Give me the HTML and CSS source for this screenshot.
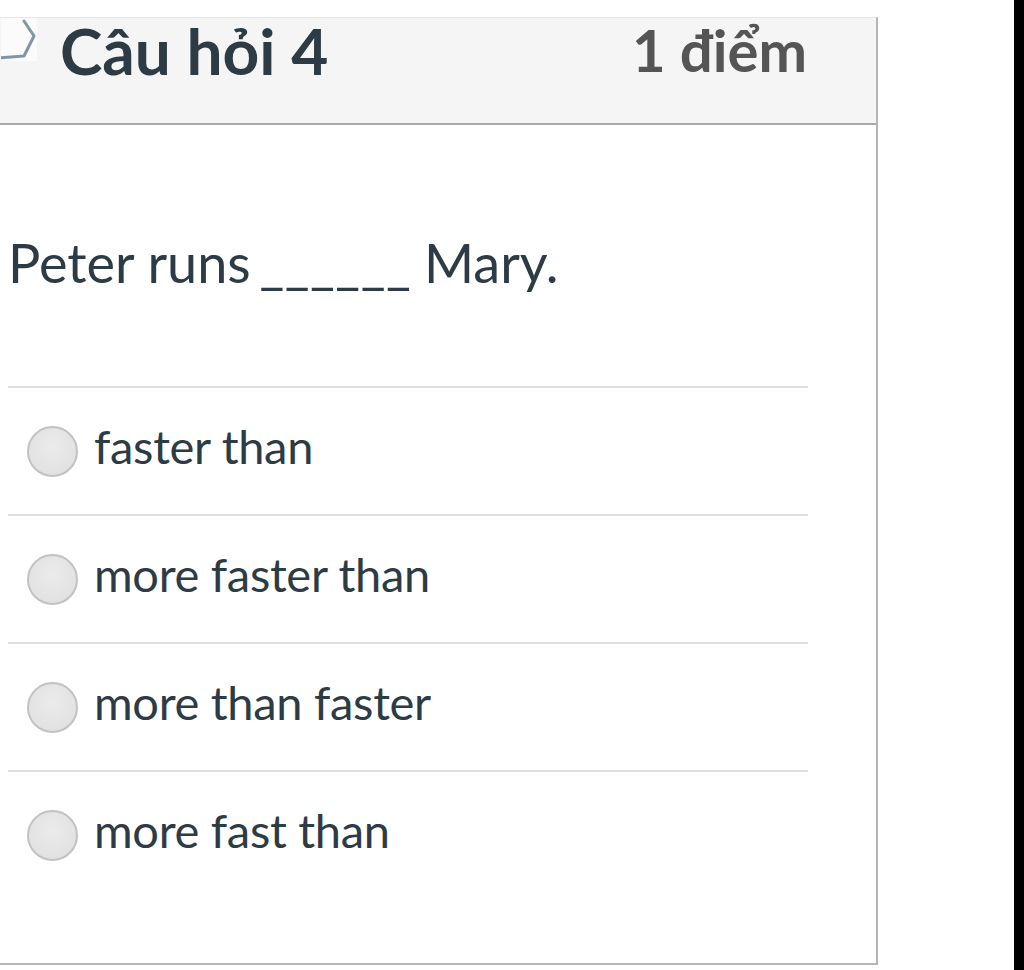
FILE: index.html
```html
<!DOCTYPE html>
<html lang="vi">
<head>
<meta charset="utf-8">
<title>Câu hỏi 4</title>
<link rel="stylesheet" href="styles.css">
</head>
<body>
<div class="screen">
  <div class="page">
    <div class="card">
      <div class="card-header">
        <svg class="flag" width="36" height="43" viewBox="0 0 36 43" aria-hidden="true">
          <path d="M23 3 L33 18 L23 38 L-2 40" fill="none" stroke="#7f95a8" stroke-width="3" stroke-linejoin="round" stroke-linecap="round"/>
        </svg>
        <h2 class="title">Câu hỏi 4</h2>
        <span class="points">1 điểm</span>
      </div>
      <div class="card-body">
        <p class="question">Peter runs <span class="blank">______</span> Mary.</p>
        <ul class="answers">
          <li class="answer"><span class="radio"></span><span class="label">faster than</span></li>
          <li class="answer"><span class="radio"></span><span class="label">more faster than</span></li>
          <li class="answer"><span class="radio"></span><span class="label">more than faster</span></li>
          <li class="answer"><span class="radio"></span><span class="label">more fast than</span></li>
        </ul>
      </div>
    </div>
  </div>
  <div class="edge"></div>
</div>
</body>
</html>
```

FILE: styles.css
```css
html {
  margin: 0;
  padding: 0;
  background: #ffffff;
}
body {
  margin: 0;
  padding: 0;
  font-family: Lato, "Open Sans", "Liberation Sans", sans-serif;
  color: #2d3b45;
}
.screen {
  display: flex;
  width: 1024px;
  height: 970px;
  overflow: hidden;
}
.page {
  flex: 0 0 1014px;
  min-width: 0;
  background: #ffffff;
  overflow: hidden;
}
.edge {
  flex: 0 0 10px;
  height: 970px;
  background-color: #000000;
}
.card {
  margin-top: 17px;
  margin-left: -30px;
  width: 908px;
  height: 948px;
  border: 2px solid #b5b5b5;
  border-top: 1px solid #e6e6e6;
  box-sizing: border-box;
  background: #ffffff;
}
.card-header {
  display: flex;
  align-items: flex-start;
  height: 107px;
  box-sizing: border-box;
  background: #f5f5f5;
  border-bottom: 2px solid #a9a9a9;
  padding-left: 30px;
  padding-right: 69px;
}
.flag {
  flex: none;
  background: #fbfbfb;
  width: 36px;
  height: 43px;
  margin-left: -1px;
  margin-right: 23px;
}
.title {
  margin: 0;
  font-size: 64px;
  font-weight: 700;
  line-height: 70px;
  color: #2d3b45;
  position: relative;
  top: -2px;
}
.points {
  margin-left: auto;
  font-size: 58px;
  font-weight: 700;
  line-height: 70px;
  color: #555555;
  position: relative;
  top: -3px;
}
.card-body {
  padding-left: 36px;
}
.question {
  margin: 0;
  padding-top: 106px;
  font-size: 54px;
  line-height: 64px;
  height: 155px;
  color: #2d3b45;
}
.blank {
  letter-spacing: 0.5px;
  margin-left: -5px;
  margin-right: -1px;
}
.answers {
  list-style: none;
  margin: 0;
  padding: 0;
  width: 800px;
}
.answer {
  display: flex;
  align-items: center;
  height: 128px;
  box-sizing: border-box;
  border-top: 2px solid #dedede;
  padding-left: 19px;
}
.radio {
  flex: none;
  width: 51px;
  height: 51px;
  box-sizing: border-box;
  border-radius: 50%;
  border: 2px solid #c2c2c2;
  background: radial-gradient(circle at 50% 40%, #ebebeb 0%, #e2e2e2 70%, #d9d9d9 100%);
  margin-right: 16px;
}
.label {
  font-size: 47px;
  line-height: 56px;
  color: #2d3b45;
  letter-spacing: -0.3px;
  position: relative;
  top: -5px;
}
```
